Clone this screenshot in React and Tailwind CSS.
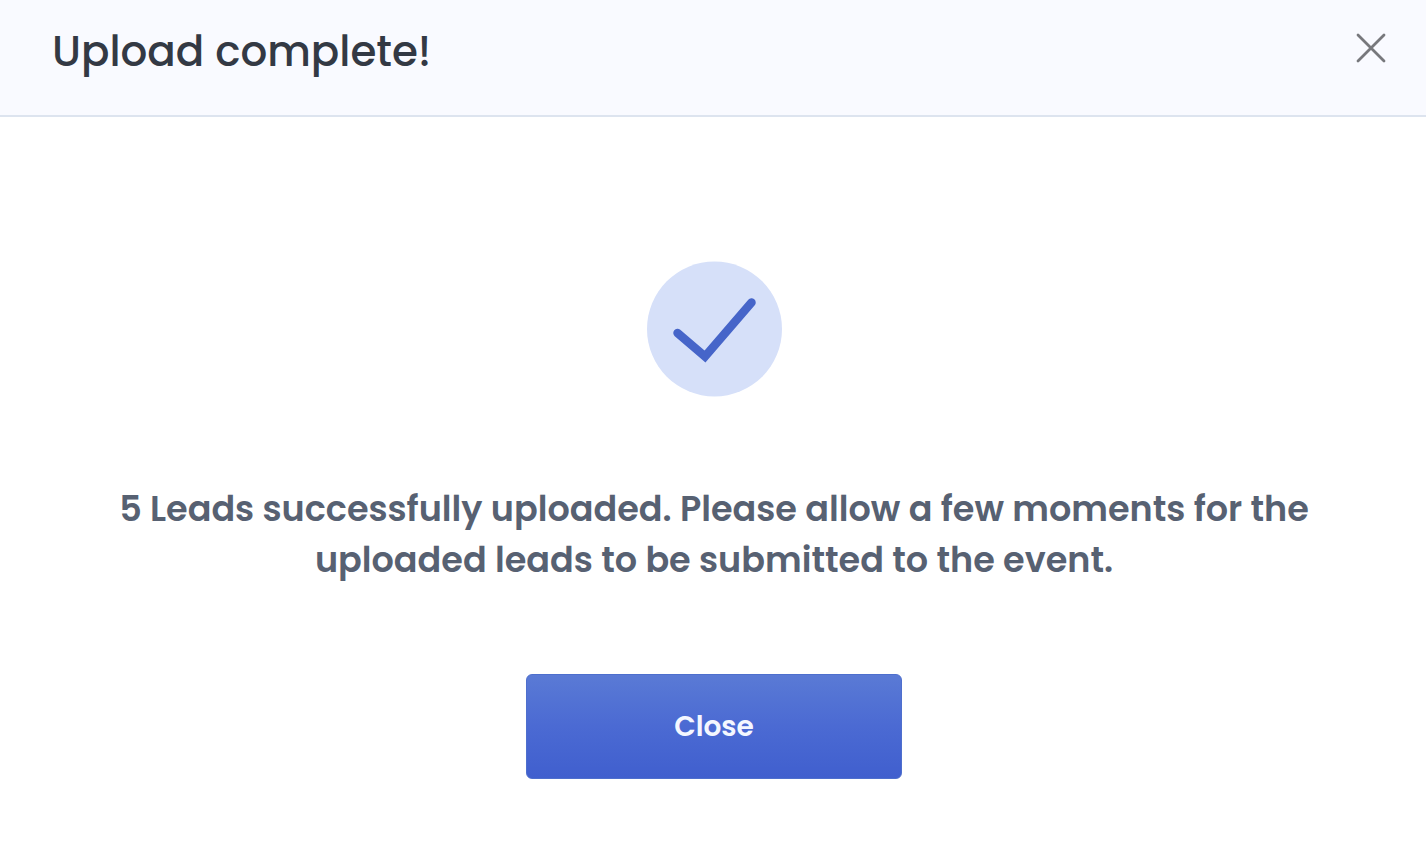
import { useState } from 'react';

export default function UploadComplete() {
  const [open, setOpen] = useState(true);
  const leadCount = 5;

  const handleClose = () => setOpen(false);

  if (!open) return null;

  return (
    <div
      role="dialog"
      aria-labelledby="upload-title"
      className="min-h-screen bg-white font-['Poppins','Inter',sans-serif]"
    >
      {/* Header */}
      <header className="flex items-start justify-between bg-[#f9faff] border-b-2 border-[#dde4ef] pt-6 pb-[35px] pl-13 pr-[35px]">
        <h1 id="upload-title" className="text-[42px] leading-14 font-medium text-[#333944]">
          Upload complete!
        </h1>
        <button
          type="button"
          aria-label="Close dialog"
          onClick={handleClose}
          className="mt-1 p-1 text-[#77787c] cursor-pointer"
        >
          <svg className="w-8 h-8" viewBox="0 0 32 32" fill="none" stroke="currentColor">
            <path strokeLinecap="round" strokeWidth={2.8} d="M3 3L29 29M29 3L3 29" />
          </svg>
        </button>
      </header>

      {/* Body */}
      <main className="flex flex-col items-center pl-[98px] pr-24 pt-36 pb-16">
        <svg className="w-[136px] h-[136px]" viewBox="0 0 136 136" fill="none" aria-hidden="true">
          <circle cx="68.5" cy="68" r="67.5" fill="#d6e0f9" />
          <path
            d="M31.5 72L59 95.5L105.5 41.5"
            stroke="#4665c9"
            strokeWidth={8.5}
            strokeLinecap="round"
          />
        </svg>

        <p className="mt-[86px] max-w-[1220px] text-center text-[35px] leading-[51px] font-semibold text-[#576172]">
          {leadCount} Leads successfully uploaded. Please allow a few moments for the
          uploaded leads to be submitted to the event.
        </p>

        <button
          type="button"
          onClick={handleClose}
          className="mt-[89px] w-94 h-[105px] rounded-md border border-[#4e6fcd] bg-linear-to-b from-[#5a7ad5] via-[#4b6ad3] to-[#405fce] text-[28px] leading-10 font-semibold text-[#f4f7ff] cursor-pointer"
        >
          Close
        </button>
      </main>
    </div>
  );
}
